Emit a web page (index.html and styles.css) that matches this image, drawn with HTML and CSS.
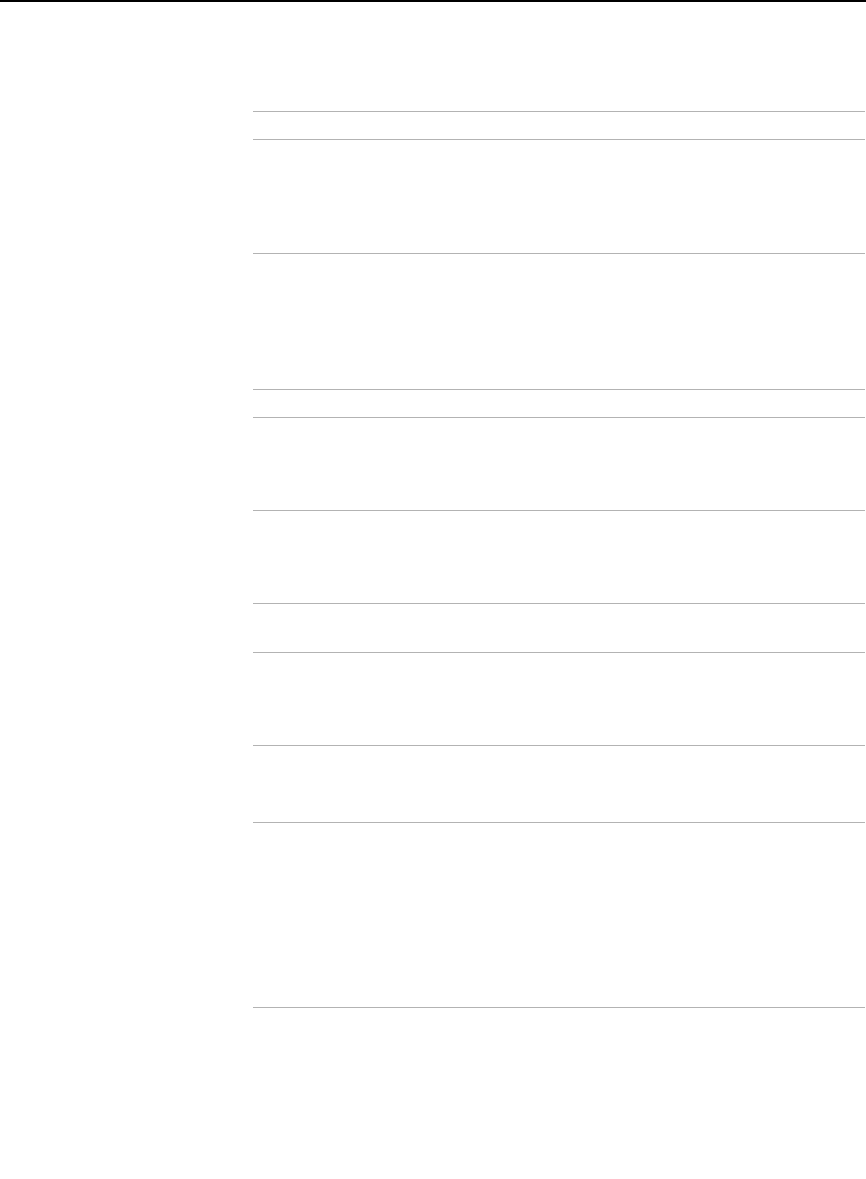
FILE: index.html
```html
<!DOCTYPE html>
<html lang="en">
<head>
    <meta charset="UTF-8">
    <meta name="viewport" content="width=device-width, initial-scale=1.0">
    <title>Document</title>
    <link rel="stylesheet" href="styles.css">
</head>
<body>

    <div class="topbar"></div>

    <div class="page">
        <div class="list">
            <div class="row r28"></div>
            <div class="row r114"></div>
            <div class="row r136"></div>
            <div class="row r28"></div>
            <div class="row r93"></div>
            <div class="row r93"></div>
            <div class="row r49"></div>
            <div class="row r93"></div>
            <div class="row r77"></div>
            <div class="row r185"></div>
            <div class="row last"></div>
        </div>
    </div>

</body>
</html>
```

FILE: styles.css
```css
* {
    box-sizing: border-box;
    margin: 0;
    font-family: 'Liberation Sans', Arial, sans-serif;
}

body {
    background-color: #fff;
    min-height: 100vh;
}

.topbar {
    height: 2px;
    background-color: #000;
}

.page {
    padding-top: 109px;
    padding-left: 253px;
    padding-right: 1px;
}

.row {
    border-top: 1px solid #b3b3b3;
}

.r28 { height: 28px; }
.r49 { height: 49px; }
.r77 { height: 77px; }
.r93 { height: 93px; }
.r114 { height: 114px; }
.r136 { height: 136px; }
.r185 { height: 185px; }

.last {
    height: 1px;
}
```
